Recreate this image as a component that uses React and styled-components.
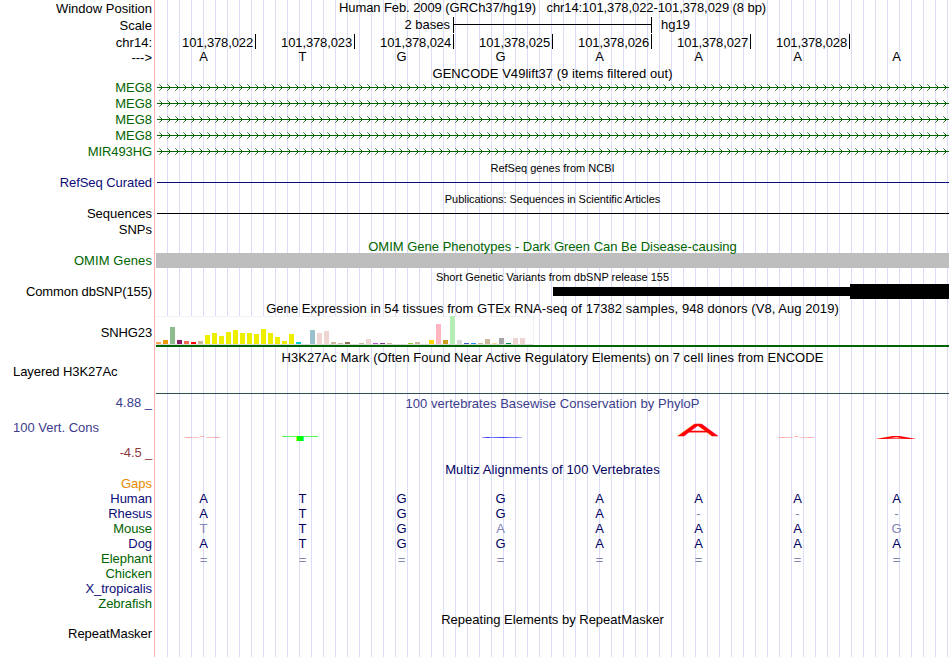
import styled, { createGlobalStyle } from "styled-components";

const GlobalStyle = createGlobalStyle`
    body{
        margin: 0;
        background: #fff;
    }
`;

const Browser = styled.main`
    display: flex;
    width: 950px;
    height: 657px;
    overflow: hidden;
    font-family: "Liberation Sans", Arial, sans-serif;
    font-size: 13px;
    line-height: 15px;
    color: #000;
    white-space: pre;
`;

const Labels = styled.div`
    box-sizing: border-box;
    width: 155px;
    padding: 1px 2px 0 13px;
    border-right: 1px solid #ffb4b4;
    text-align: right;
`;

const Label = styled.div`
    height: 15px;
    margin-top: ${({ $gap }) => $gap || 0}px;
    text-align: ${({ $left }) => ($left ? "left" : "right")};
    color: ${({ $color }) => $color || "#000"};
    letter-spacing: ${({ $spacing }) => $spacing || 0}px;
`;

const Tracks = styled.div`
    width: 793px;
    margin-left: 1px;
    background: repeating-linear-gradient(to right, transparent 0 11px, #dcdcf8 11px 12px);
`;

const Title = styled.div`
    height: 15px;
    margin-top: ${({ $gap }) => $gap || 0}px;
    text-align: center;
    color: ${({ $color }) => $color || "#000"};
    letter-spacing: ${({ $spacing }) => $spacing || 0}px;
`;

const SmallTitle = styled(Title)`
    height: 12px;
    font-size: 11px;
    line-height: 12px;
`;

const Scale = styled.div`
    display: flex;
    height: 16px;
    margin-top: 2px;

    .bases{
        width: 294px;
        padding-right: 3px;
        text-align: right;
    }

    .bar{
        display: flex;
        align-items: center;
        width: 197px;
        height: 16px;
        border: solid #000;
        border-width: 0 1px;
    }

    .bar hr{
        flex: 1;
        height: 1px;
        margin: 0 0 1px;
        border: none;
        background: #000;
    }

    .assembly{
        padding-left: 9px;
    }
`;

const Ruler = styled.div`
    display: grid;
    grid-template-columns: repeat(7, 99px);
    margin: 1px 0 0 1px;
`;

const Tick = styled.div`
    box-sizing: border-box;
    height: 15px;
    padding: 1px 2px 0 0;
    border-right: 1px solid #000;
    text-align: right;
    letter-spacing: -0.13px;
`;

const Bases = styled.div`
    display: grid;
    grid-template-columns: repeat(8, 99px);
    height: 15px;
    margin-top: ${({ $gap }) => $gap || 0}px;
    margin-left: -2px;
    padding-top: ${({ $lower }) => ($lower ? 1 : 0)}px;
    text-align: center;
`;

const Base = styled.span`
    color: ${({ $faded, $color }) => ($faded ? "#8284b4" : $color || "#000")};
`;

const GeneModel = styled.svg`
    display: block;
    width: 793px;
    height: 7px;
    margin-top: ${({ $gap }) => $gap}px;
`;

const Line = styled.div`
    height: ${({ $height }) => $height || 1}px;
    margin-top: ${({ $gap }) => $gap || 0}px;
    margin-left: ${({ $inset }) => $inset || 0}px;
    background: ${({ $color }) => $color};
`;

const Variant = styled.div`
    display: flex;
    align-items: center;
    height: 15px;
    margin: 1px 0 0 397px;

    .thin{
        width: 297px;
        height: 9px;
        background: #000;
    }

    .thick{
        flex: 1;
        height: 15px;
        background: #000;
    }
`;

const Expression = styled.div`
    box-sizing: border-box;
    display: flex;
    align-items: flex-end;
    gap: 2px;
    width: 378px;
    height: 29px;
    border: solid #f2f2f2;
    border-width: 1px 1px 0 0;
    background: #fff;
    box-shadow: inset 0 -1px #dcdcdc;
`;

const Tissue = styled.i`
    width: 5px;
    height: ${({ $height }) => $height}px;
    margin-bottom: 1px;
    background: ${({ $color }) => $color};
`;

const Logo = styled.div`
    display: grid;
    grid-template-columns: repeat(8, 99px);
    grid-template-rows: 25px;
    justify-items: center;
    align-items: end;
    height: 25px;
    margin-left: -2px;
`;

const LogoBase = styled.span`
    height: 42px;
    font-size: 60px;
    line-height: 42px;
    color: ${({ $color }) => $color};
    -webkit-text-stroke: ${({ $stroke }) => $stroke}px ${({ $color }) => $color};
    transform: translate(${({ $shift }) => $shift}px, ${({ $drop }) => $drop}px) scaleY(${({ $scale }) => $scale});
    transform-origin: bottom;
`;

const green = "#006400";
const navy = "#00005f";
const blue = "#3c3c8c";
const labelNavy = "#0c0c78";

const positions = ["022", "023", "024", "025", "026", "027", "028"];

const tissues = [
    [2, "#ffa54f"], [4, "#ee9a00"], [17, "#8fbc8f"], [4, "#8b1c62"], [3, "#ee6a50"], [2, "#ff0000"],
    [3, "#cdb79e"], [9, "#eeee00"], [11, "#eeee00"], [8, "#eeee00"], [12, "#eeee00"], [14, "#eeee00"],
    [11, "#eeee00"], [11, "#eeee00"], [10, "#eeee00"], [15, "#eeee00"], [11, "#eeee00"], [7, "#eeee00"],
    [3, "#eeee00"], [10, "#eeee00"], [2, "#00cdcd"], [0, "#ee82ee"], [14, "#9ac0cd"], [11, "#eed5d2"],
    [13, "#eed5d2"], [2, "#cdb79e"], [1, "#cdb79e"], [2, "#8b7355"], [0, "#8b7355"], [1, "#cdb79e"],
    [5, "#eed5d2"], [1, "#b452cd"], [1, "#7a378b"], [1, "#cdb79e"], [0, "#cdb79e"], [0, "#cdb79e"],
    [1, "#9acd32"], [2, "#cdb79e"], [0, "#7a67ee"], [4, "#ffd700"], [20, "#ffb6c1"], [4, "#cd9b1d"],
    [28, "#b4eeb4"], [4, "#d9d9d9"], [1, "#3a5fcd"], [1, "#1e90ff"], [1, "#cdb79e"], [5, "#cdb79e"],
    [1, "#ffd39b"], [6, "#a6a6a6"], [1, "#008b45"], [6, "#eed5d2"], [6, "#eed5d2"],
];

const conservation = [
    { base: "A", color: "#ff0000", shift: -1, drop: 1.8, scale: 0.042, stroke: 0.5 },
    { base: "T", color: "#00ff00", shift: -2.5, drop: 5, scale: 0.12, stroke: 1.5 },
    null,
    { base: "G", color: "#0000ff", shift: 2, drop: 1.8, scale: 0.04, stroke: 1 },
    null,
    { base: "A", color: "#ff0000", shift: -0.5, drop: 0, scale: 0.29, stroke: 1 },
    { base: "A", color: "#ff0000", shift: -1, drop: 1.8, scale: 0.041, stroke: 0.5 },
    { base: "A", color: "#ff0000", shift: -0.5, drop: 2.8, scale: 0.065, stroke: 0.5 },
];

// lower case marks a base that differs from the human one
const alignments = ["ATGGAAAA", "ATGGA---", "tTGaAAAg", "ATGGAAAA", "========"];

const species = [
    ["Human", labelNavy], ["Rhesus", labelNavy], ["Mouse", green], ["Dog", labelNavy],
    ["Elephant", green], ["Chicken", green], ["X_tropicalis", labelNavy], ["Zebrafish", green],
];

function Transcript({ gap }) {
    return (
        <GeneModel $gap={gap}>
            <defs>
                <pattern id="strand" x="2" width="8" height="7" patternUnits="userSpaceOnUse">
                    <path d="M1 0h1v1h-1zM1 6h1v1h-1z" fill="#006400" fillOpacity=".6" />
                    <path d="M2 1h1v1h-1zM2 5h1v1h-1z" fill="#006400" fillOpacity=".8" />
                    <path d="M3 2h1v3h-1z" fill="#006400" />
                </pattern>
            </defs>
            <rect x="1" y="3" width="792" height="1" fill="#006400" />
            <rect x="2" width="791" height="7" fill="url(#strand)" />
        </GeneModel>
    );
}

function SideLabels() {
    return (
        <Labels>
            <Label>Window Position</Label>
            <Label $gap={2}>Scale</Label>
            <Label $gap={2}>chr14:</Label>
            <Label>---&gt;</Label>
            <Label $gap={15} $color={green}>MEG8</Label>
            <Label $gap={1} $color={green}>MEG8</Label>
            <Label $gap={1} $color={green}>MEG8</Label>
            <Label $gap={1} $color={green}>MEG8</Label>
            <Label $gap={1} $color={green} $spacing={-0.1}>MIR493HG</Label>
            <Label $gap={16} $color={labelNavy} $spacing={-0.07}>RefSeq Curated</Label>
            <Label $gap={16}>Sequences</Label>
            <Label $gap={1}>SNPs</Label>
            <Label $gap={16} $color={green} $spacing={0.08}>OMIM Genes</Label>
            <Label $gap={16} $spacing={-0.11}>Common dbSNP(155)</Label>
            <Label $gap={26} $spacing={-0.12}>SNHG23</Label>
            <Label $gap={24} $left $spacing={-0.07}>Layered H3K27Ac</Label>
            <Label $gap={16} $color={blue}>4.88 _</Label>
            <Label $gap={10} $left $color={blue}>100 Vert. Cons</Label>
            <Label $gap={10} $color="#8c3c3c" $spacing={-0.15}>-4.5 _</Label>
            <Label $gap={16} $color="#e68a00">Gaps</Label>
            {species.map(([name, color]) => (
                <Label key={name} $color={color} $spacing={-0.05}>{name}</Label>
            ))}
            <Label $gap={15} $spacing={-0.05}>RepeatMasker</Label>
        </Labels>
    );
}

export default function App() {
    return (
        <>
            <GlobalStyle />
            <Browser>
                <SideLabels />
                <Tracks>
                    <Title $spacing={-0.085}>Human Feb. 2009 (GRCh37/hg19)   chr14:101,378,022-101,378,029 (8 bp)</Title>
                    <Scale>
                        <div className="bases">2 bases</div>
                        <div className="bar"><hr /></div>
                        <div className="assembly">hg19</div>
                    </Scale>
                    <Ruler>
                        {positions.map((position) => (
                            <Tick key={position}>101,378,{position}</Tick>
                        ))}
                    </Ruler>
                    <Bases>
                        {[..."ATGGAAAA"].map((base, i) => <Base key={i}>{base}</Base>)}
                    </Bases>

                    <Title $gap={2} $spacing={0.04}>GENCODE V49lift37 (9 items filtered out)</Title>
                    <Transcript gap={3} />
                    <Transcript gap={9} />
                    <Transcript gap={9} />
                    <Transcript gap={9} />
                    <Transcript gap={9} />

                    <SmallTitle $gap={7}>RefSeq genes from NCBI</SmallTitle>
                    <Line $gap={8} $inset={1} $color={labelNavy} />
                    <SmallTitle $gap={10} $spacing={-0.05}>Publications: Sequences in Scientific Articles</SmallTitle>
                    <Line $gap={8} $inset={1} $color="#000" />

                    <Title $gap={25} $color={green}>OMIM Gene Phenotypes - Dark Green Can Be Disease-causing</Title>
                    <Line $gap={-1} $height={15} $color="#bebebe" />
                    <SmallTitle $gap={3}>Short Genetic Variants from dbSNP release 155</SmallTitle>
                    <Variant>
                        <div className="thin" />
                        <div className="thick" />
                    </Variant>

                    <Title $gap={2} $spacing={0.06}>Gene Expression in 54 tissues from GTEx RNA-seq of 17382 samples, 948 donors (V8, Aug 2019)</Title>
                    <Expression>
                        {tissues.map(([height, color], i) => (
                            <Tissue key={i} $height={height} $color={color} />
                        ))}
                    </Expression>
                    <Line $height={2} $color="#006400" />

                    <Title $gap={3} $spacing={0.05}>H3K27Ac Mark (Often Found Near Active Regulatory Elements) on 7 cell lines from ENCODE</Title>
                    <Line $gap={28} $color="#2f4f4f" />

                    <Title $gap={2} $color={blue} $spacing={0.04}>100 vertebrates Basewise Conservation by PhyloP</Title>
                    <Logo>
                        {conservation.map((item, i) => item ? (
                            <LogoBase
                                key={i}
                                $color={item.color}
                                $shift={item.shift}
                                $drop={item.drop}
                                $scale={item.scale}
                                $stroke={item.stroke}
                            >
                                {item.base}
                            </LogoBase>
                        ) : <span key={i} />)}
                    </Logo>

                    <Title $gap={26} $color={navy} $spacing={0.1}>Multiz Alignments of 100 Vertebrates</Title>
                    {alignments.map((row, i) => (
                        <Bases key={i} $gap={i === 0 ? 14 : 0} $lower={row[0] === "="}>
                            {[...row].map((base, j) => (
                                <Base key={j} $color={navy} $faded={/[a-z=-]/.test(base)}>{base.toUpperCase()}</Base>
                            ))}
                        </Bases>
                    ))}

                    <Title $gap={45}>Repeating Elements by RepeatMasker</Title>
                </Tracks>
            </Browser>
        </>
    );
}
